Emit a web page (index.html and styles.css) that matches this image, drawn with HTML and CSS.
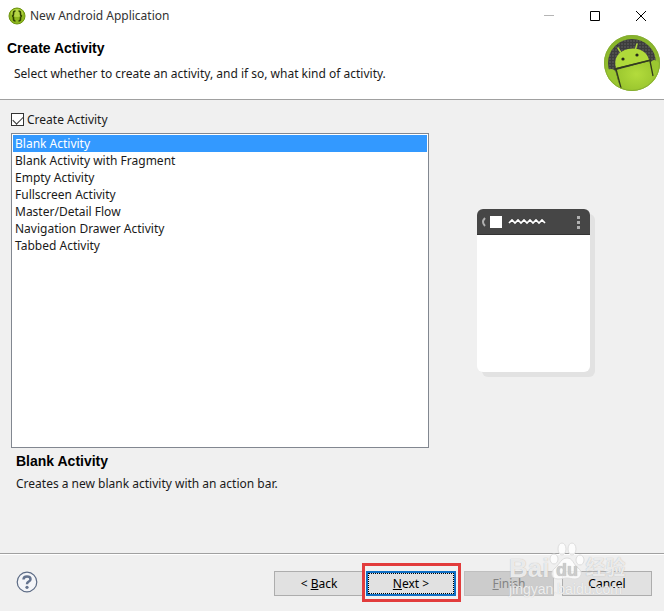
FILE: index.html
```html
<!DOCTYPE html>
<html lang="en">
<head>
    <meta charset="UTF-8">
    <meta name="viewport" content="width=device-width, initial-scale=1.0">
    <title>New Android Application</title>
    <link rel="stylesheet" href="styles.css">
</head>
<body>
    <div class="window">
        <div class="titlebar">
            <svg class="app-icon" width="18" height="18" viewBox="0 0 18 18" aria-hidden="true">
                <circle cx="9" cy="9" r="8" fill="#8fb81f" stroke="#6d9410"/>
                <ellipse cx="9" cy="6" rx="6" ry="4" fill="#b4d544"/>
                <path d="M7.500 4Q5.500 4 5.500 6V7Q5.500 9 4 9Q5.500 9 5.500 11V12Q5.500 14 7.500 14M10.500 4Q12.500 4 12.500 6V7Q12.500 9 14 9Q12.500 9 12.500 11V12Q12.500 14 10.500 14" fill="none" stroke="#2f4200" stroke-width="1.600"/>
            </svg>
            <span class="title">New Android Application</span>
            <button type="button" class="win-btn" aria-label="Minimize" disabled>
                <svg width="12" height="12" viewBox="0 0 12 12"><path d="M1 5.500H11" stroke="#b5b5b5"/></svg>
            </button>
            <button type="button" class="win-btn" aria-label="Maximize">
                <svg width="12" height="12" viewBox="0 0 12 12"><path d="M1.500 1.500H10.500V10.500H1.500Z" fill="none" stroke="#000"/></svg>
            </button>
            <button type="button" class="win-btn" aria-label="Close">
                <svg width="12" height="12" viewBox="0 0 12 12"><path d="M1 1L11 11M11 1L1 11" stroke="#000"/></svg>
            </button>
        </div>

        <header class="banner">
            <div class="banner-text">
                <h1>Create Activity</h1>
                <p>Select whether to create an activity, and if so, what kind of activity.</p>
            </div>
            <svg class="logo" width="58" height="58" viewBox="0 0 58 58" aria-hidden="true">
                <defs>
                    <linearGradient id="green" x1="0" y1="0" x2="0" y2="1">
                        <stop offset="0" stop-color="#86b32a"/>
                        <stop offset="1" stop-color="#9cc631"/>
                    </linearGradient>
                    <radialGradient id="body" cx="50%" cy="40%" r="60%">
                        <stop offset="0" stop-color="#b3dc3c"/>
                        <stop offset="1" stop-color="#96c22c"/>
                    </radialGradient>
                    <pattern id="mesh" width="3" height="3" patternUnits="userSpaceOnUse">
                        <rect width="3" height="3" fill="#3c3c3c"/>
                        <path d="M0 0H2V2H0Z" fill="#4e4e4e"/>
                    </pattern>
                    <clipPath id="disc"><circle cx="29" cy="29" r="28"/></clipPath>
                </defs>
                <circle cx="29" cy="29" r="28" fill="url(#green)"/>
                <circle cx="29" cy="29" r="24" fill="url(#mesh)"/>
                <g clip-path="url(#disc)">
                    <path d="M13 36L47 27L54 60H18Z" fill="url(#body)"/>
                    <path d="M4 39Q4 35 8 35Q12 35 13 39L18 58H0ZM48 31Q47 27 51 26Q54 26 58 31V54H52Z" fill="#9bc730"/>
                    <path d="M13 34C10 24 16 17 25 15C35 13 44 17 46 26Z" fill="#b0da3a"/>
                    <path d="M17.500 18L15 14M32.500 15L34 10" stroke="#b0da3a" stroke-width="1.500" stroke-linecap="round"/>
                    <path d="M12 35L48 26M13 35L18 54M47 27L50 42" fill="none" stroke="#333d1c" stroke-width="1.300"/>
                    <circle cx="20" cy="25" r="1.600" fill="#252a18"/>
                    <circle cx="34" cy="21" r="1.600" fill="#252a18"/>
                </g>
                <circle cx="29" cy="29" r="27.500" fill="none" stroke="#86ad34"/>
            </svg>
        </header>

        <main class="content">
            <div class="check-row">
                <input type="checkbox" id="create" checked>
                <label for="create">Create Activity</label>
            </div>

            <div class="columns">
                <select class="activities" size="7" aria-label="Activity type">
                    <option selected>Blank Activity</option>
                    <option>Blank Activity with Fragment</option>
                    <option>Empty Activity</option>
                    <option>Fullscreen Activity</option>
                    <option>Master/Detail Flow</option>
                    <option>Navigation Drawer Activity</option>
                    <option>Tabbed Activity</option>
                </select>
                <div class="preview">
                    <div class="phone">
                        <svg class="phone-bar" viewBox="0 0 113 26" aria-hidden="true">
                            <rect width="113" height="26" fill="#464646"/>
                            <path d="M8 9Q4 13 8 17" fill="none" stroke="#b0b0b0" stroke-width="2"/>
                            <rect x="13" y="7" width="12" height="12" fill="#fff"/>
                            <path d="M32 14L35 11L38 14L41 11L44 14L47 11L50 14L53 11L56 14L59 11L62 14L65 11L68 14" fill="none" stroke="#fff" stroke-width="1.700"/>
                            <path d="M100 7H103V10H100ZM100 12H103V15H100ZM100 17H103V20H100Z" fill="#b0b0b0"/>
                            <path d="M0 25.500H113" stroke="#333"/>
                        </svg>
                    </div>
                </div>
            </div>

            <div class="description">
                <h2>Blank Activity</h2>
                <p>Creates a new blank activity with an action bar.</p>
            </div>
        </main>

        <footer class="footer">
            <button type="button" class="help" aria-label="Help">
                <svg width="22" height="22" viewBox="0 0 22 22">
                    <circle cx="11" cy="11" r="9.800" fill="#f4f5f8" stroke="#5c6b85" stroke-width="1.200"/>
                    <path d="M7.500 8.500Q7.500 5.500 11 5.500Q14.500 5.500 14.500 8.200Q14.500 9.800 12.600 10.700Q11 11.500 11 13.300" fill="none" stroke="#64738e" stroke-width="2.500"/>
                    <circle cx="11" cy="16.300" r="1.600" fill="#64738e"/>
                </svg>
            </button>
            <div class="nav-buttons">
                <button type="button" class="btn">&lt; <u>B</u>ack</button>
                <button type="button" class="btn btn-default"><u>N</u>ext &gt;</button>
            </div>
            <button type="button" class="btn" disabled><u>F</u>inish</button>
            <button type="button" class="btn">Cancel</button>

            <div class="watermark">
                <div class="wm-brand">
                    <span>Bai</span>
                    <svg width="36" height="38" viewBox="0 0 36 38" aria-hidden="true">
                        <ellipse cx="5" cy="17" rx="4" ry="5"/>
                        <ellipse cx="13" cy="7" rx="4" ry="6"/>
                        <ellipse cx="23" cy="7" rx="4" ry="6"/>
                        <ellipse cx="31" cy="18" rx="4" ry="5"/>
                        <path d="M18 16C24 16 24 22 29 26C35 30 32 37 26 37C22 37 21 36 18 36C15 36 13 37 9 37C2 37 1 30 6 26C11 22 12 16 18 16Z"/>
                        <text x="18" y="34" text-anchor="middle">du</text>
                    </svg>
                    <span class="wm-cjk" lang="zh">经验</span>
                </div>
                <div class="wm-url">jingyan.baidu.com</div>
            </div>
        </footer>
    </div>
</body>
</html>
```
FILE: styles.css
```css
* {
    box-sizing: border-box;
}
body {
    margin: 0;
    font-family: "Noto Sans", "Noto Sans CJK SC", sans-serif;
    font-size: 12px;
    line-height: 17px;
    color: #1a1a1a;
    background: #f0f0f0;
}
h1, h2, p {
    margin: 0;
}
h1, h2 {
    font-family: "Liberation Sans", Arial, sans-serif;
    font-size: 14px;
    line-height: 16px;
    color: #000;
}
button {
    font: inherit;
    color: inherit;
    padding: 0;
}
.window {
    display: flex;
    flex-direction: column;
    min-height: 100vh;
}

/* title bar */
.titlebar {
    display: flex;
    align-items: center;
    height: 31px;
    padding-left: 8px;
    background: #fff;
}
.title {
    flex: 1;
    margin-left: 4px;
    color: #333;
}
.win-btn {
    display: flex;
    align-items: center;
    justify-content: center;
    width: 46px;
    height: 30px;
    border: 0;
    background: none;
}

/* wizard banner */
.banner {
    display: flex;
    justify-content: space-between;
    padding: 3px 3px 7px 7px;
    background: #fff;
    border-bottom: 1px solid #a0a0a0;
}
.banner-text {
    padding-top: 6px;
}
.banner-text p {
    margin: 9px 0 0 7px;
}
.logo {
    flex: none;
}

/* page content */
.content {
    flex: 1;
    display: flex;
    flex-direction: column;
    padding: 11px 11px 0;
}
.check-row {
    display: flex;
    align-items: center;
    gap: 3px;
    margin-bottom: 5px;
}
.check-row input {
    appearance: none;
    width: 13px;
    height: 13px;
    margin: 0;
    border: 1px solid #333;
    background: #fff;
}
.check-row input:checked::before {
    content: "";
    display: block;
    width: 9px;
    height: 5px;
    margin: 2px 0 0 1px;
    border: solid #333;
    border-width: 0 0 1px 1px;
    transform: rotate(-45deg);
}
.columns {
    flex: 1;
    display: grid;
    grid-template-columns: 418fr 224fr;
}
.activities {
    padding: 1px;
    border: 1px solid #828790;
    border-radius: 0;
    background: #fff;
    font: inherit;
    color: #1a1a1a;
    outline: 0;
}
.activities option {
    min-height: 17px;
    padding: 0 2px;
    line-height: 17px;
}
.activities option:checked {
    background: #3399ff linear-gradient(#3399ff, #3399ff);
    color: #fff;
}
.preview {
    display: flex;
    align-items: center;
    justify-content: center;
    padding: 0 15px 1px 0;
}
.phone {
    width: 113px;
    height: 163px;
    overflow: hidden;
    border-radius: 6px;
    background: #fff;
    box-shadow: 5px 5px 0 #e2e2e2;
}
.phone-bar {
    display: block;
    width: 100%;
}
.description {
    padding: 5px 5px 0;
    min-height: 105px;
}
.description p {
    margin-top: 6px;
}

/* buttons */
.footer {
    position: relative;
    display: flex;
    align-items: center;
    gap: 8px;
    height: 58px;
    padding: 2px 12px 0 16px;
    border-top: 1px solid #a0a0a0;
    box-shadow: inset 0 1px 0 #fff;
}
.help {
    display: flex;
    margin-bottom: 4px;
    border: 0;
    background: none;
}
.nav-buttons {
    display: flex;
    gap: 2px;
    margin-left: auto;
}
.btn {
    width: 90px;
    height: 25px;
    border: 1px solid #adadad;
    background: #e1e1e1;
    color: #000;
}
.btn:disabled {
    border-color: #bfbfbf;
    background: #cccccc;
    color: #838383;
}
.btn-default {
    position: relative;
    border: 2px solid #0f6fc5;
}
.btn-default::before {
    content: "";
    position: absolute;
    inset: 0;
    border: 1px dotted #000;
}
.btn-default::after {
    content: "";
    position: absolute;
    inset: -10px -7px -8px -6px;
    border: 3px solid #e23c3c;
}

/* watermark over the buttons */
.watermark {
    position: absolute;
    right: 34px;
    bottom: 13px;
    width: 121px;
    color: rgba(255, 255, 255, 0.75);
    pointer-events: none;
}
.wm-brand {
    display: flex;
    align-items: flex-end;
    height: 38px;
    font-family: "Liberation Sans", "Noto Sans CJK SC", sans-serif;
    font-size: 26px;
    font-weight: bold;
    line-height: 24px;
    text-shadow: 0 0 1px #aaa;
}
.wm-brand svg {
    fill: #fff;
    fill-opacity: 0.8;
    stroke: #ddd;
    flex: none;
}
.wm-brand text {
    fill: #ccc;
    fill-opacity: 1;
    stroke: none;
    font-size: 18px;
}
.wm-cjk {
    font-size: 20px;
}
.wm-url {
    font-family: "Liberation Sans", Arial, sans-serif;
    font-size: 14px;
    line-height: 18px;
    text-shadow: 0 0 1px #bbb;
}
```
